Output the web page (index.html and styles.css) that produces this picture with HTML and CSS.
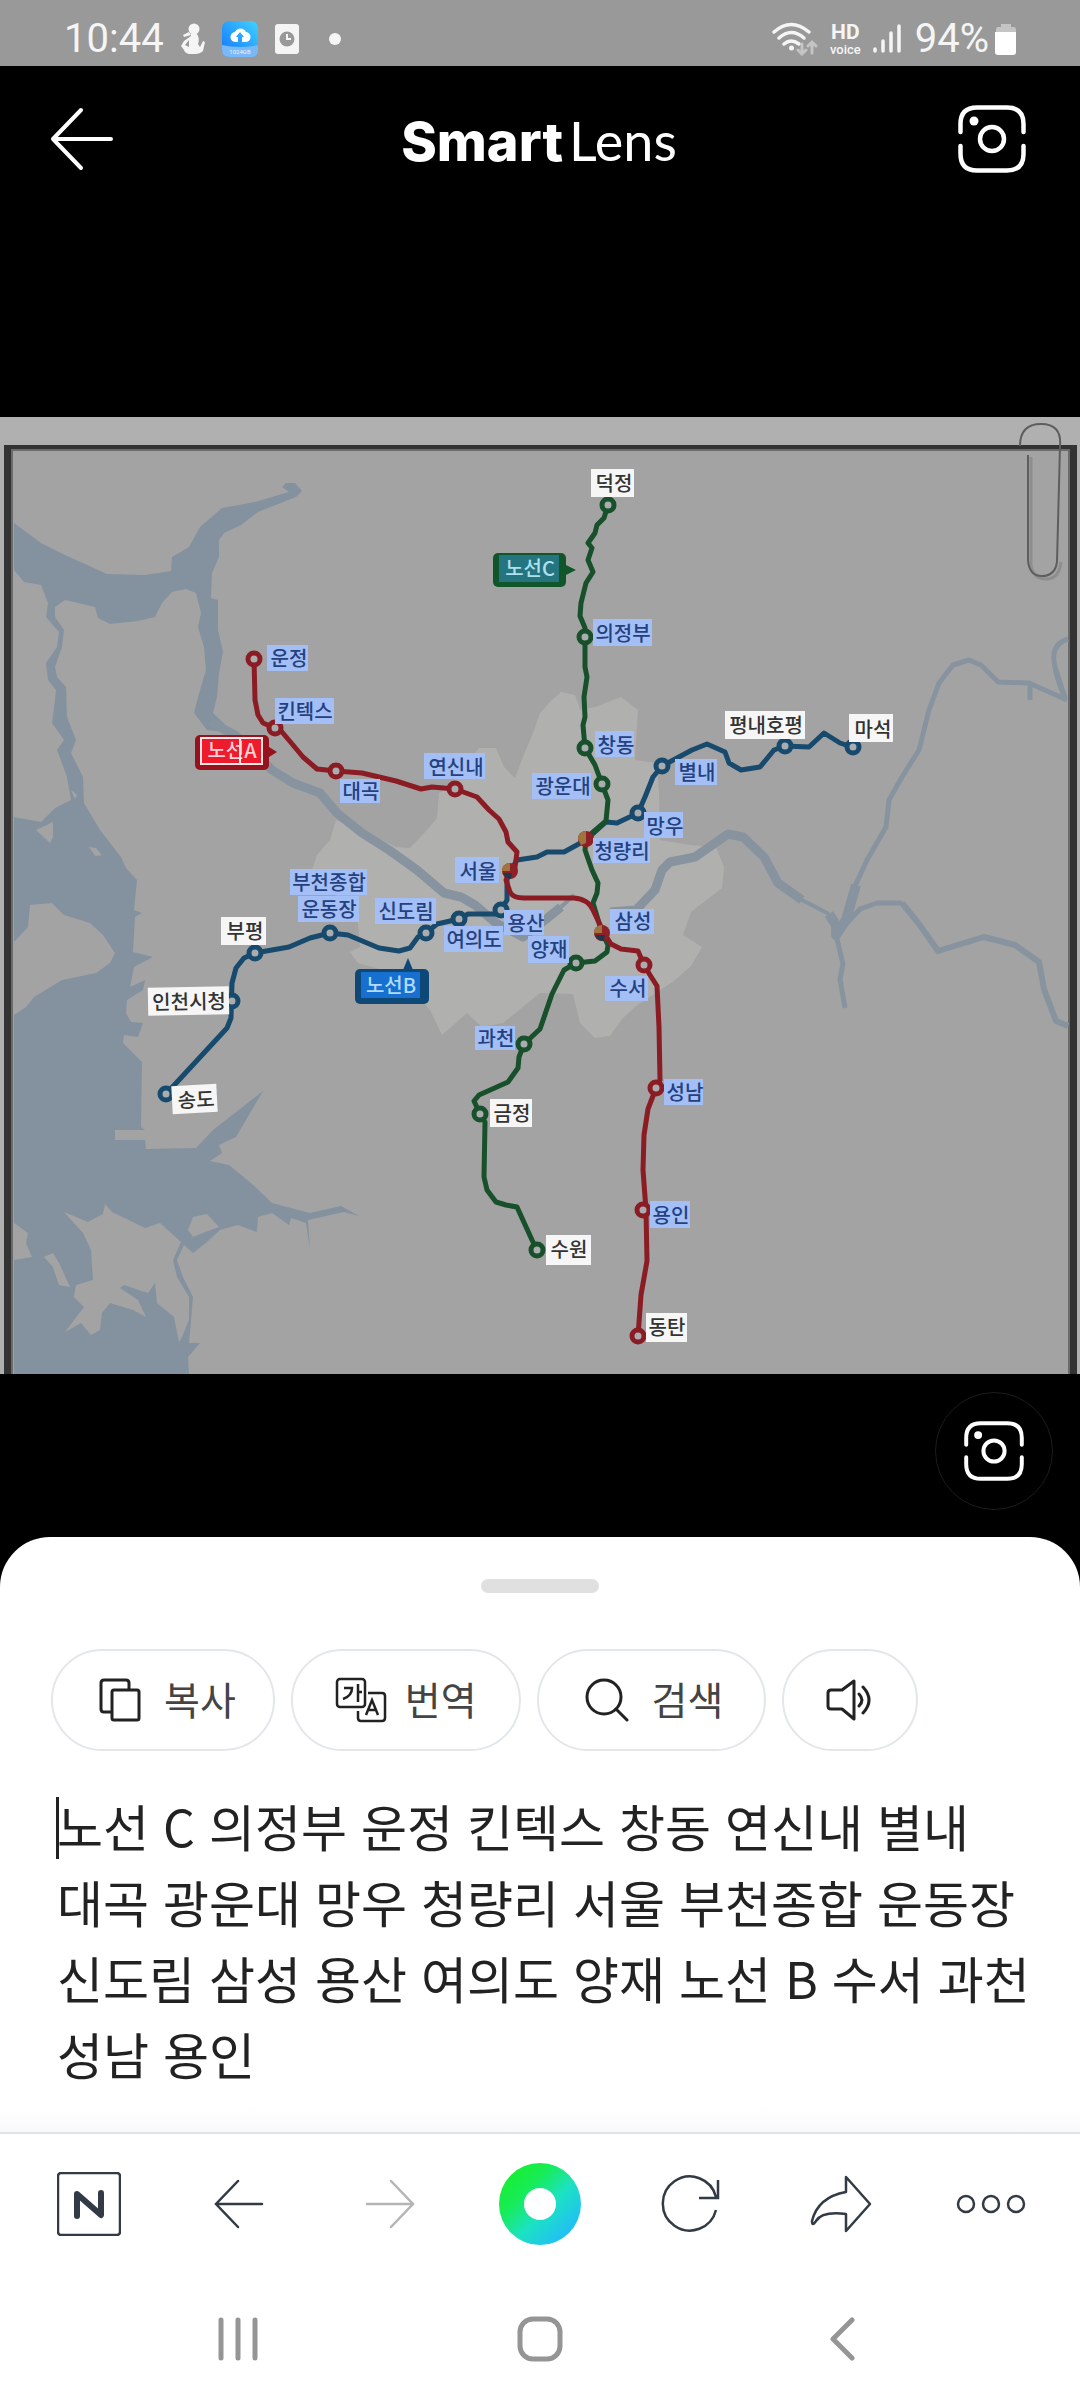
FILE: index.html
```html
<!DOCTYPE html>
<html lang="ko">
<head>
<meta charset="utf-8">
<meta name="viewport" content="width=device-width, initial-scale=1">
<title>SmartLens</title>
<link rel="stylesheet" href="styles.css">
</head>
<body>
<div class="app">
  <div class="status">
    <div class="status-left">
      <span class="clock">10:44</span>
      <svg width="26" height="32" viewBox="0 0 26 32" fill="#f5f5f5"><circle cx="14" cy="6" r="5.500"/><path d="M9 9 3 12l1 2 7-2zM11 11h6q3 5 1 10l2 3 3-6 2 1-2 9q-3 3-8 3H9q-4-1-5-4l-3-4 3-5 7-5zM9 17l-4 5 4 2z"/></svg>
      <svg width="36" height="36" viewBox="0 0 36 36"><defs><linearGradient id="cloud" x1="0" y1="1" x2="1" y2="0"><stop offset="0" stop-color="#1473ff"/><stop offset="1" stop-color="#3fd2ff"/></linearGradient></defs><rect width="36" height="36" rx="7" fill="url(#cloud)"/><path d="M0 24q18 4 36 0v5q0 7-7 7H7q-7 0-7-7z" fill="#79b9f8"/><path d="M16 21h-2a5 5 0 0 1-1-10 6 6 0 0 1 11 0 5 5 0 0 1-1 10h-3v-5h2l-4-5-4 5h2z" fill="#fff"/><text x="18" y="33" class="tiny">1024GB</text></svg>
      <svg width="26" height="32" viewBox="0 0 26 32"><rect x="1" y="1" width="24" height="30" rx="3" fill="#f5f5f5"/><circle cx="13" cy="16" r="7.500" fill="#999"/><path d="M13 11v5h4" fill="none" stroke="#f5f5f5" stroke-width="2"/></svg>
      <i class="dot"></i>
    </div>
    <div class="status-right">
      <svg width="46" height="34" viewBox="0 0 46 34" fill="none" stroke="#f5f5f5" stroke-width="3.500" stroke-linecap="round"><path d="M2 10q17-15 35 0M7 16q12-11 25 0M12 22q7-6 15 0"/><circle cx="19.500" cy="26" r="2.500" fill="#f5f5f5" stroke="none"/><path d="M30 22v10m-4-4 4 4 4-4M40 31V20m-4 4 4-4 4 4" stroke="#c4c4c4" stroke-width="3"/></svg>
      <span class="hd"><b>HD</b><span>voice</span></span>
      <svg width="28" height="30" viewBox="0 0 28 30" stroke="#f5f5f5" stroke-width="3.500" stroke-linecap="round"><path d="M2 25v2M10 17v10M18 9v18M26 2v25"/></svg>
      <span class="charge"><span class="clock">94%</span>
      <svg width="22" height="32" viewBox="0 0 22 32"><path d="M6 1h10v3h3q2 0 2 3v3H1V7q0-3 2-3h3z" fill="#c4c4c4"/><path d="M0 9h21v20q0 3-3 3H3q-3 0-3-3z" fill="#fff"/></svg></span>
    </div>
  </div>

  <header class="header">
    <button class="icon-btn" aria-label="뒤로"><svg width="64" height="64" viewBox="0 0 64 64" fill="none" stroke="#fff" stroke-width="4" stroke-linecap="round" stroke-linejoin="round"><path d="M61 32H3M31 3 3 32l28 29"/></svg></button>
    <h1 class="logo"><b>Smart</b><span>Lens</span></h1>
    <button class="icon-btn" aria-label="촬영"><svg width="68" height="68" viewBox="0 0 68 68" fill="none" stroke="#fff" stroke-width="4.500" stroke-linecap="round"><path d="M2.500 27V19Q2.500 2.500 19 2.500H49Q65.500 2.500 65.500 19v8M2.500 41v8Q2.500 65.500 19 65.500H49Q65.500 65.500 65.500 49V41"/><circle cx="34" cy="34" r="12"/><circle cx="16" cy="16" r="4.500" fill="#fff" stroke="none"/></svg></button>
  </header>

  <main class="photo">
    <svg class="map" viewBox="0 417 1080 957" role="img" aria-label="GTX 노선도">
      <rect y="417" width="1080" height="957" fill="#b0b0b0"/>
      <rect x="4" y="445" width="1073" height="929" fill="#333"/>
      <rect x="11" y="449" width="1059" height="925" fill="#6b6b6b"/>
      <rect x="13" y="451" width="1055" height="923" fill="#a3a3a3"/>
      <path class="city" d="M540 713 533 733 523 757 515 778 504 767 496 748 479 748 448 787 439 793 437 818 427 830 410 848 396 847 336 820 330 840 317 855 312 870 335 895 358 923 360 947 350 952 358 963 400 975 430 1010 442 1035 467 1013 482 1027 503 1023 540 993 573 994 580 1023 595 1038 610 1036 622 1019 636 1006 674 981 691 966 702 947 683 935 691 912 722 888 724 867 716 847 690 845 660 840 659 793 657 763 635 760 638 710 621 697 595 707 580 710 575 695 561 692 550 702Z"/>
      <path class="water" d="M14 523 41 543 65 555 107 574 145 575 171 571 172 557 189 547 200 527 222 508 255 502 289 492 282 487 286 483 295 483 302 491 296 497 258 512 241 525 224 533 219 540 219 557 212 573 211 598 218 600 218 630 223 652 219 673 217 697 213 713 234 733 207 730 194 713 198 697 206 670 204 647 198 627 201 613 196 593 186 589 172 592 162 603 155 617 138 621 110 624 98 618 95 607 65 600 55 607 55 617 64 630 62 647 55 667 57 677 66 687 67 717 76 740 71 753 83 777 84 803 100 830 121 857 126 868 137 880 134 910 142 913 135 917 133 952 153 957 134 967 130 987 145 980 143 990 127 1000 126 1013 131 1022 143 1023 138 1037 124 1035 123 1043 142 1062 141 1127 145 1130 115 1130 115 1140 145 1140 146 1149 196 1148 213 1130 263 1091 236 1137 219 1145 222 1153 210 1161 229 1165 251 1183 272 1203 310 1213 341 1206 359 1216 344 1212 308 1220 310 1250 306 1223 291 1218 289 1225 272 1213 258 1217 257 1232 238 1225 220 1230 207 1242 193 1253 184 1245 177 1260 183 1277 193 1297 189 1343 200 1343 188 1357 189 1374 14 1374Z"/>
      <g class="land">
        <path d="M14 570 24 582 41 585 48 603 46 617 59 632 57 647 46 663 48 680 56 690 55 700 52 723 64 740 57 750 67 777 71 800 55 808 41 822 14 817Z"/>
        <path d="M36 830 53 822 53 837 50 843ZM89 847 96 848 102 855 95 856ZM71 790 77 795 75 799Z"/>
        <path d="M14 942 28 927 30 905 52 903 64 915 90 923 103 935 115 953 110 963 96 973 62 980 34 997 26 1007 14 1015Z"/>
        <path d="M64 1212 88 1222 103 1214 105 1204 112 1212 145 1228 160 1223 181 1242 173 1260 177 1277 189 1297 189 1320 182 1337 179 1342 174 1317 157 1303 155 1283 148 1293 124 1285 120 1288 138 1300 146 1317 133 1310 110 1303 102 1313 100 1330 91 1335 81 1323 65 1332 84 1307 74 1297 76 1285 93 1280 91 1250 83 1233Z"/>
        <path d="M188 1230 193 1217 207 1214 219 1227 203 1233 193 1237ZM44 1257 53 1253 59 1263 70 1287 59 1285 53 1267ZM14 1223 28 1233 26 1243 32 1257 14 1260Z"/>
      </g>
      <g class="river">
        <path stroke-width="9" d="M210 722 235 735 272 770 293 783 320 793 337 813 362 833 389 850 417 870 444 893 461 897 475 905 496 923 523 937 545 920 561 907"/>
        <path stroke-width="9" d="M610 912 636 910 655 890 662 870 670 862 695 857 728 834 743 837 764 857 778 883 802 900"/>
        <path stroke-width="4" d="M561 907 574 895M778 883 802 900 829 914"/>
        <path stroke-width="10" d="M856 885 846 920 836 935 836 925 829 914"/>
        <path stroke-width="5" d="M836 935 843 964 840 979 845 1008M836 935 860 909 877 903 902 903M1065 698 1055 667"/>
        <path stroke-width="6" d="M902 903 919 924 938 951 984 937 1015 945 1039 962 1044 989 1056 1021 1068 1026"/>
        <path stroke-width="5" d="M850 897 867 860 886 827 889 800 902 777 919 750 929 710 939 683 953 665 969 660 981 665 998 682 1029 683 1067 700M1068 639Q1052 644 1054 661T1065 698M1030 685V700"/>
      </g>
      <g class="route blue">
        <path d="M166 1094 227 1028 231 1018 232 983 236 968 244 958 255 953 289 947 310 938 330 933 348 935 379 948 399 951 410 948 418 937 426 933 437 924 459 919 468 914 496 914 501 910 507 900V877L517 860 537 857 547 852H564L586 840 606 822 617 823 638 813 645 797 653 777 662 766 692 750 707 744 725 752 729 763 741 770 760 767 774 750 785 746 809 747 824 733 840 743 852 747"/>
        <circle cx="166" cy="1094" r="6"/><circle cx="232" cy="1001" r="6"/><circle cx="255" cy="953" r="6"/><circle cx="330" cy="933" r="6"/><circle cx="426" cy="933" r="6"/><circle cx="459" cy="919" r="6"/><circle cx="501" cy="910" r="6"/><circle cx="638" cy="813" r="6"/><circle cx="662" cy="766" r="6"/><circle cx="785" cy="746" r="6"/><circle cx="853" cy="747" r="6"/>
      </g>
      <g class="route green">
        <path d="M608 505 604 518 597 525 595 533 588 543 592 548 588 560 593 572 586 583 581 603 580 616 585 628V667L587 677 584 697 585 717 583 725 585 748 595 765 602 784 608 800 606 821 592 833 586 840 585 850 592 870 598 883 597 893 593 903 602 933 608 945 607 952 595 961 576 963 564 970 552 994 540 1029 524 1044 519 1057 518 1068 508 1082 479 1095 474 1101 480 1114 485 1122 484 1177 487 1190 496 1202 506 1205 517 1207 532 1240 537 1250"/>
        <circle cx="608" cy="505" r="6"/><circle cx="585" cy="637" r="6"/><circle cx="585" cy="748" r="6"/><circle cx="602" cy="784" r="6"/><circle cx="576" cy="963" r="6"/><circle cx="524" cy="1044" r="6"/><circle cx="480" cy="1114" r="6"/><circle cx="537" cy="1250" r="6"/>
      </g>
      <g class="route red">
        <path d="M254 659 255 700 258 715 263 723 275 728 282 732 293 745 303 757 317 769 336 771 362 773 396 781 421 789 432 787 455 789 477 797 489 810 499 819 506 832 508 842 517 852 515 867 506 880 510 892Q513 898 524 898H574Q588 899 593 910L604 933 611 944 621 949 638 951 644 965 650 975 657 986 659 1027 660 1080 656 1088 648 1109 644 1135 643 1170 646 1210 647 1261 641 1295 638 1336"/>
        <circle cx="254" cy="659" r="6"/><circle cx="275" cy="728" r="6"/><circle cx="336" cy="771" r="6"/><circle cx="455" cy="789" r="6"/><circle cx="644" cy="965" r="6"/><circle cx="656" cy="1088" r="6"/><circle cx="643" cy="1210" r="6"/><circle cx="638" cy="1336" r="6"/>
      </g>
      <g><circle cx="510" cy="871" r="8" fill="#8e2027"/><path d="M502 871a8 8 0 0 1 8-8v8z" fill="#a0733f"/><path d="M503 873h9l-1 6q-6 0-8-6" fill="#243547"/><circle cx="586" cy="839" r="8" fill="#8e2027"/><path d="M578 839a8 8 0 0 1 8-8v12l-5 2z" fill="#a0733f"/><circle cx="602" cy="933" r="8" fill="#8e2027"/><path d="M594 933a8 8 0 0 1 8-8v8z" fill="#a0733f"/><path d="M595 935h10l-1 6q-7 0-9-6" fill="#243547"/></g>

      <g class="hit">
        <rect x="267" y="645" width="41" height="26"/><text x="289" y="666">운정</text>
        <rect x="275" y="698" width="59" height="26"/><text x="305" y="719">킨텍스</text>
        <rect x="340" y="779" width="40" height="24"/><text x="361" y="799">대곡</text>
        <rect x="424" y="753" width="61" height="26"/><text x="456" y="775">연신내</text>
        <rect x="455" y="857" width="44" height="26"/><text x="478" y="879">서울</text>
        <rect x="290" y="869" width="77" height="26"/><text x="329" y="890">부천종합</text>
        <rect x="298" y="896" width="61" height="26"/><text x="329" y="917">운동장</text>
        <rect x="375" y="898" width="61" height="26"/><text x="406" y="919">신도림</text>
        <rect x="444" y="926" width="59" height="26"/><text x="474" y="947">여의도</text>
        <rect x="504" y="910" width="40" height="25"/><text x="526" y="931">용산</text>
        <rect x="528" y="936" width="41" height="27"/><text x="549" y="957">양재</text>
        <rect x="475" y="1026" width="40" height="24"/><text x="496" y="1046">과천</text>
        <rect x="593" y="619" width="59" height="27"/><text x="623" y="641">의정부</text>
        <rect x="595" y="731" width="39" height="26"/><text x="616" y="753">창동</text>
        <rect x="532" y="773" width="59" height="26"/><text x="563" y="794">광운대</text>
        <rect x="675" y="759" width="42" height="26"/><text x="697" y="780">별내</text>
        <rect x="644" y="812" width="39" height="26"/><text x="665" y="834">망우</text>
        <rect x="593" y="838" width="57" height="25"/><text x="622" y="859">청량리</text>
        <rect x="610" y="909" width="44" height="25"/><text x="633" y="929">삼성</text>
        <rect x="605" y="976" width="43" height="25"/><text x="628" y="996">수서</text>
        <rect x="664" y="1079" width="39" height="26"/><text x="685" y="1100">성남</text>
        <rect x="650" y="1201" width="40" height="27"/><text x="671" y="1223">용인</text>
      </g>
      <g class="miss">
        <rect x="591" y="469" width="43" height="28"/><text x="614" y="491">덕정</text>
        <rect x="725" y="711" width="80" height="28"/><text x="766" y="733">평내호평</text>
        <rect x="849" y="714" width="44" height="28"/><text x="873" y="737">마석</text>
        <rect x="221" y="917" width="45" height="28"/><text x="245" y="939">부평</text>
        <g transform="rotate(-1 188 1001)"><rect x="148" y="987" width="81" height="28"/><text x="189" y="1009">인천시청</text></g>
        <g transform="rotate(-3 194 1099)"><rect x="172" y="1085" width="45" height="28"/><text x="196" y="1107">송도</text></g>
        <rect x="490" y="1099" width="42" height="28"/><text x="512" y="1121">금정</text>
        <rect x="546" y="1235" width="45" height="30"/><text x="569" y="1257">수원</text>
        <rect x="646" y="1313" width="41" height="29"/><text x="667" y="1335">동탄</text>
      </g>

      <g class="badge">
        <path d="M269 747 277 752 269 757Z" fill="#96121d"/><rect x="195" y="735" width="74" height="35" rx="5" fill="#96121d"/><rect x="201" y="738" width="61" height="26" fill="#ed1b2c"/><text x="232" y="758" fill="#ffd0d4">노선A</text><path d="M201 738h61v26h-61zM240 738v26" fill="none" stroke="#fbe4e6" stroke-width="2"/>
        <path d="M566 565 576 570 566 575Z" fill="#11562a"/><rect x="493" y="553" width="73" height="34" rx="5" fill="#11562a"/><rect x="499" y="555" width="60" height="27" fill="#24757f"/><text x="530" y="576" fill="#aee0ee">노선C</text>
        <path d="M403 970 408 958 413 970Z" fill="#0d4876"/><rect x="355" y="969" width="74" height="35" rx="5" fill="#0d4876"/><rect x="361" y="972" width="59" height="26" fill="#176fcf"/><text x="391" y="993" fill="#b0dcff">노선B</text>
      </g>
      <path d="M1031 457V565Q1033 579 1046 579T1061 562" fill="none" stroke="#8e8e8e" stroke-width="3"/>
      <path d="M1020 446Q1020 424 1041 424T1060 446L1057 562Q1055 576 1042 576T1028 560V455" fill="none" stroke="#5e5e5e" stroke-width="2"/>
    </svg>
    <div class="float-row">
      <button class="float-btn" aria-label="다시 촬영"><svg width="60" height="60" viewBox="0 0 68 68" fill="none" stroke="#fff" stroke-width="4.500" stroke-linecap="round"><path d="M2.500 27V19Q2.500 2.500 19 2.500H49Q65.500 2.500 65.500 19v8M2.500 41v8Q2.500 65.500 19 65.500H49Q65.500 65.500 65.500 49V41"/><circle cx="34" cy="34" r="12"/><circle cx="16" cy="16" r="4.500" fill="#fff" stroke="none"/></svg></button>
    </div>
  </main>

  <section class="sheet">
    <div class="handle"></div>
    <div class="actions">
      <button class="pill"><svg width="42" height="44" viewBox="0 0 42 44" fill="none" stroke="#222" stroke-width="3"><path d="M13 34H5q-3 0-3-3V5q0-3 3-3h22q3 0 3 3v6"/><rect x="13" y="12" width="27" height="30" rx="2"/></svg><span>복사</span></button>
      <button class="pill pill-translate"><svg width="52" height="46" viewBox="0 0 52 46" fill="none" stroke="#222" stroke-width="2.500"><rect x="2" y="2" width="28" height="28" rx="3"/><path d="M9 11h8q0 8-9 11M23 7v18M23 15h4M33 16h14q3 0 3 3v22q0 3-3 3H26q-3 0-3-3v-7M31 38l6-15 6 15M33 33h8"/></svg><span>번역</span></button>
      <button class="pill pill-search"><svg width="44" height="44" viewBox="0 0 44 44" fill="none" stroke="#222" stroke-width="3" stroke-linecap="round"><circle cx="19" cy="19" r="17"/><path d="m31 31 11 11"/></svg><span>검색</span></button>
      <button class="pill pill-sound" aria-label="듣기"><svg width="48" height="44" viewBox="0 0 48 44" fill="none" stroke="#222" stroke-width="3" stroke-linejoin="round" stroke-linecap="round"><path d="M28 3 16 12H5q-3 0-3 3v13q0 3 3 3h11l12 10zM33 16q6 6 0 12M37 9q12 13 0 26"/></svg></button>
    </div>
    <div class="result">
      <textarea class="result-text" rows="4" spellcheck="false" aria-label="인식된 텍스트">노선 C 의정부 운정 킨텍스 창동 연신내 별내 대곡 광운대 망우 청량리 서울 부천종합 운동장 신도림 삼성 용산 여의도 양재 노선 B 수서 과천 성남 용인</textarea>
      <span class="caret"></span>
    </div>
  </section>

  <nav class="toolbar" aria-label="도구 모음">
    <button aria-label="네이버 홈"><svg width="64" height="64" viewBox="0 0 64 64" fill="none" stroke="#323a45"><rect x="1" y="1" width="62" height="62" rx="3" stroke-width="2.500"/><path d="M20 44V22l24 21V21" stroke-width="6" stroke-linecap="round" stroke-linejoin="round"/></svg></button>
    <button aria-label="이전"><svg width="50" height="50" viewBox="0 0 50 50" fill="none" stroke="#323a45" stroke-width="2.500" stroke-linecap="round"><path d="M48 25H2M24 2 2 25l22 23"/></svg></button>
    <button aria-label="다음" disabled><svg width="50" height="50" viewBox="0 0 50 50" fill="none" stroke="#b5b5b5" stroke-width="2.500" stroke-linecap="round"><path d="M2 25h46M26 2l22 23-22 23"/></svg></button>
    <button aria-label="그린닷"><svg width="82" height="82" viewBox="0 0 82 82"><defs><linearGradient id="dot" x1=".15" y1=".15" x2=".85" y2=".85"><stop offset="0" stop-color="#17ee37"/><stop offset=".25" stop-color="#17ec55"/><stop offset=".6" stop-color="#1ce2c2"/><stop offset="1" stop-color="#22bff5"/></linearGradient></defs><circle cx="41" cy="41" r="41" fill="url(#dot)"/><circle cx="41" cy="41" r="16" fill="#fff"/></svg></button>
    <button aria-label="새로고침"><svg width="60" height="60" viewBox="0 0 60 60" fill="none" stroke="#323a45" stroke-width="2.500"><path d="M56 36A27 27 0 1 1 56 23M58 6v18H39"/></svg></button>
    <button aria-label="공유"><svg width="62" height="60" viewBox="0 0 62 60" fill="none" stroke="#323a45" stroke-width="2.500" stroke-linejoin="round"><path d="M36 3 60 30 36 57V40Q12 37 6 47q-4 6-4 0 6-24 34-29z"/></svg></button>
    <button aria-label="더보기"><svg width="70" height="20" viewBox="0 0 70 20" fill="none" stroke="#323a45" stroke-width="2.500"><circle cx="10" cy="10" r="8"/><circle cx="35" cy="10" r="8"/><circle cx="60" cy="10" r="8"/></svg></button>
  </nav>

  <nav class="sysnav" aria-label="시스템">
    <button aria-label="최근 앱"><svg width="44" height="46" viewBox="0 0 44 46" stroke="#959595" stroke-width="5" stroke-linecap="round"><path d="M5 4v38M22 4v38M39 4v38"/></svg></button>
    <button aria-label="홈"><svg width="46" height="46" viewBox="0 0 46 46" fill="none" stroke="#959595" stroke-width="5"><rect x="3" y="3" width="40" height="40" rx="13"/></svg></button>
    <button aria-label="뒤로"><svg width="26" height="46" viewBox="0 0 26 46" fill="none" stroke="#959595" stroke-width="5" stroke-linecap="round" stroke-linejoin="round"><path d="M23 4 4 23l19 19"/></svg></button>
  </nav>
</div>
</body>
</html>
```
FILE: styles.css
```css
* { box-sizing: border-box; }

body {
  margin: 0;
  background: #000;
  font-family: "Noto Sans CJK KR", "Noto Sans", sans-serif;
}

button {
  padding: 0;
  border: 0;
  background: none;
  font: inherit;
  color: inherit;
  display: flex;
  align-items: center;
  justify-content: center;
}

svg { display: block; flex: none; }

.app {
  display: flex;
  flex-direction: column;
  min-height: 100vh;
}

/* status bar */
.status {
  display: flex;
  justify-content: space-between;
  align-items: center;
  height: 66px;
  padding: 12px 63px 0 64px;
  background: #999;
  color: #f5f5f5;
  font-family: Roboto, sans-serif;
}

.status-left, .status-right { display: flex; align-items: center; }
.status-left { gap: 16px; }
.status-right { gap: 12px; }
.charge { display: flex; align-items: center; gap: 6px; margin-left: 2px; }
.clock { font-size: 40px; line-height: 48px; }
.tiny { font-size: 6px; fill: #e8f4ff; text-anchor: middle; }

.dot {
  width: 12px;
  height: 12px;
  margin-left: 13px;
  border-radius: 50%;
  background: #f5f5f5;
}

.hd {
  display: flex;
  flex-direction: column;
  align-items: center;
  font-size: 13px;
  line-height: 15px;
  font-weight: 500;
}

.hd b { font-size: 21px; line-height: 20px; }

/* title bar */
.header {
  display: flex;
  align-items: center;
  justify-content: space-between;
  height: 146px;
  padding: 0 54px 0 50px;
  color: #fff;
}

.logo {
  display: flex;
  align-items: baseline;
  gap: 6px;
  margin: 4px 0 0 6px;
  font-family: Lato, sans-serif;
  font-size: 54px;
  line-height: 64px;
  font-weight: 400;
}

.logo b {
  font-family: Inter, sans-serif;
  font-weight: 800;
}

/* photo with recognised labels */
.photo { padding-top: 205px; }
.map { width: 100%; height: auto; }
.city { fill: #b0b0af; }
.water { fill: #84929f; }
.land { fill: #a3a3a3; }
.river { fill: none; stroke: #87949f; stroke-linejoin: round; }
.route { stroke-width: 5; stroke-linejoin: round; }
.route path { fill: none; }
.route circle { fill: #a9adb0; }
.route.red { stroke: #8b1c24; }
.route.green { stroke: #17502a; }
.route.blue { stroke: #174a6c; }
.map text { font-size: 20px; font-weight: 500; text-anchor: middle; }
.map .tiny { font-size: 6px; }
.hit rect { fill: #a3bff5; }
.hit text { fill: #24417f; }
.miss rect { fill: #f6f6f6; }
.miss text { fill: #333; }

.float-row {
  display: flex;
  justify-content: flex-end;
  padding: 18px 27px 27px;
}

.float-btn {
  width: 118px;
  height: 118px;
  border: 1px solid #1c1c1c;
  border-radius: 50%;
}

/* result sheet */
.sheet {
  flex: 1;
  padding-bottom: 40px;
  border-radius: 50px 50px 0 0;
  background: linear-gradient(#fff calc(100% - 24px), #f8f9fb);
}

.handle {
  width: 118px;
  height: 14px;
  margin: 42px auto 56px;
  border-radius: 7px;
  background: #e0e0e0;
}

.actions {
  display: flex;
  gap: 16px;
  padding: 0 51px;
}

.pill {
  gap: 23px;
  height: 102px;
  padding: 0 37px 0 46px;
  border: 2px solid #e3e7ea;
  border-radius: 51px;
  color: #444;
  font-size: 39px;
  line-height: 56px;
}

.pill span { padding-bottom: 4px; }
.pill-translate { gap: 18px; padding: 0 42px; }
.pill-search { padding: 0 41px 0 46px; }
.pill-sound { padding: 0 42px; }

.result {
  position: relative;
  margin-top: 36px;
  padding: 0 50px 0 57px;
}

.result-text {
  display: block;
  width: 100%;
  height: 304px;
  padding: 0;
  border: 0;
  outline: 0;
  resize: none;
  overflow: hidden;
  background: none;
  color: #222;
  font-family: inherit;
  font-size: 50px;
  line-height: 76px;
  word-break: keep-all;
}

.caret {
  position: absolute;
  left: 56px;
  top: 10px;
  width: 3px;
  height: 62px;
  background: #222;
}

/* browser toolbar */
.toolbar {
  display: grid;
  grid-template-columns: repeat(7, 1fr);
  align-items: center;
  height: 142px;
  padding: 0 14px;
  border-top: 2px solid #e2e3e5;
  background: #fff;
}

.sysnav {
  display: grid;
  grid-template-columns: repeat(3, 1fr);
  align-items: center;
  height: 134px;
  padding: 0 87px 4px;
  background: #fff;
}
```
